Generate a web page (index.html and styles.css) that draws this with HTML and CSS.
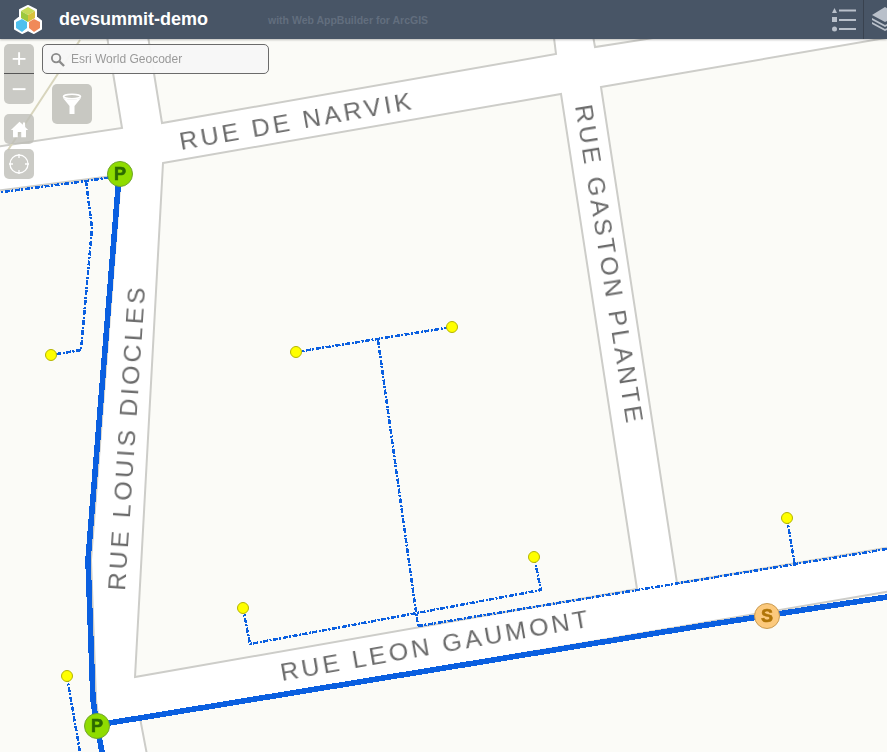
FILE: index.html
```html
<!DOCTYPE html>
<html lang="en">
<head>
    <meta charset="UTF-8">
    <meta name="viewport" content="width=device-width, initial-scale=1.0">
    <title>devsummit-demo</title>
    <link rel="stylesheet" href="styles.css">
</head>
<body>
    <header class="app-header">
        <div class="brand">
            <svg class="logo" viewBox="0 0 30 30" width="30" height="30">
                <path d="M15 1 L23 5 L23 12 L28 16 L28 24 L21 28 L15 25 L9 28 L2 24 L2 16 L7 12 L7 5 Z" fill="#fff" stroke="#fff" stroke-width="2" stroke-linejoin="round"/>
                <path d="M15 2 L22 6 L15 10 L8 6 Z" fill="#c6da55"/>
                <path d="M8 6 L15 10 L15 17 L8 13 Z" fill="#9cc83c"/>
                <path d="M22 6 L15 10 L15 17 L22 13 Z" fill="#d8c23c"/>
                <path d="M3 17 L9 14 L14 17 L14 23 L9 27 L3 23 Z" fill="#4fc0ee"/>
                <path d="M16 17 L21 14 L27 17 L27 23 L21 27 L16 23 Z" fill="#f08a5a"/>
            </svg>
            <span class="app-name">devsummit-demo</span>
            <span class="app-subtitle">with Web AppBuilder for ArcGIS</span>
        </div>
        <div class="header-tools">
            <svg class="tool-icon" viewBox="0 0 24 24" width="24" height="24">
                <path d="M0 5 L2.5 0 L5 5 Z" fill="#b9c0ca"/>
                <rect x="0" y="9" width="5" height="5" fill="#b9c0ca"/>
                <circle cx="2.5" cy="21" r="2.5" fill="#b9c0ca"/>
                <rect x="7" y="1.5" width="17" height="2" fill="#b9c0ca"/>
                <rect x="7" y="11" width="17" height="2" fill="#b9c0ca"/>
                <rect x="7" y="20" width="17" height="2" fill="#b9c0ca"/>
            </svg>
            <div class="layers-tab">
                <svg class="layers-icon" viewBox="0 0 26 24" width="26" height="24">
                    <path d="M13 0 L26 8 L13 15 L0 8 Z" fill="#b9c0ca"/>
                    <path d="M0 11 L13 18 L26 11 L26 13 L13 20 L0 13 Z" fill="#b9c0ca"/>
                    <path d="M0 15 L13 22 L26 15 L26 17 L13 24 L0 17 Z" fill="#b9c0ca"/>
                </svg>
            </div>
        </div>
    </header>

    <main class="map">
        <svg class="map-canvas" viewBox="0 0 887 752" width="887" height="752">
            <rect width="887" height="752" fill="#ffffff"/>
            <g class="block">
                <path d="M163 163 L561 94 L637 589 L135 677 Z"/>
                <path d="M601 87 L892 37 L892 547 L677 583 Z"/>
                <path d="M-5 147 L122 128 L106 30 L-5 30 Z"/>
                <path d="M147 30 L162 123 L556 54 L553 30 Z"/>
                <path d="M592 30 L595 47 L660 37 L660 30 Z"/>
                <path d="M-5 191 L121 175 L91 560 L96 700 L104 760 L-5 760 Z"/>
                <path d="M140 718 L892 591 L892 760 L148 760 Z"/>
            </g>
            <path class="rail" d="M80 40 L8 150"/>
            <g class="street-name">
                <text transform="translate(181 150) rotate(-10)" textLength="238" lengthAdjust="spacingAndGlyphs">RUE DE NARVIK</text>
                <text transform="translate(575 106) rotate(80.8)" textLength="325" lengthAdjust="spacingAndGlyphs">RUE GASTON PLANTE</text>
                <text transform="translate(125 591) rotate(-86.2)" textLength="307" lengthAdjust="spacingAndGlyphs">RUE LOUIS DIOCLES</text>
                <text transform="translate(282 681) rotate(-10)" textLength="315" lengthAdjust="spacingAndGlyphs">RUE LEON GAUMONT</text>
            </g>
            <g class="main-line">
                <path d="M119 176 L88 560 L93 700 L97 726 L102 752"/>
                <path d="M97 725 L700 626 L887 597"/>
            </g>
            <g class="service-line">
                <path d="M-5 193 L86 181 L119 176"/>
                <path d="M86 181 L92 228 L81 350 L51 355"/>
                <path d="M296 352 L452 327"/>
                <path d="M378 340 L418 626"/>
                <path d="M243 608 L250 644 L541 590 L534 557"/>
                <path d="M418 626 L887 549"/>
                <path d="M787 519 L795 566"/>
                <path d="M67 677 L80 752"/>
            </g>
            <g class="service-point">
                <circle cx="51" cy="355" r="5.5"/>
                <circle cx="296" cy="352" r="5.5"/>
                <circle cx="452" cy="327" r="5.5"/>
                <circle cx="534" cy="557" r="5.5"/>
                <circle cx="243" cy="608" r="5.5"/>
                <circle cx="787" cy="518" r="5.5"/>
                <circle cx="67" cy="676" r="5.5"/>
            </g>
            <g class="pole">
                <circle cx="120" cy="174" r="12.5"/>
                <text x="120" y="180">P</text>
                <circle cx="97" cy="726" r="12.5"/>
                <text x="97" y="732">P</text>
            </g>
            <g class="substation">
                <circle cx="767" cy="616" r="12.5"/>
                <text x="767" y="622">S</text>
            </g>
        </svg>

        <div class="map-controls">
            <div class="zoom-box">
                <div class="map-btn zoom-in">+</div>
                <div class="map-btn zoom-out">&minus;</div>
            </div>
            <div class="map-btn home-btn">
                <svg viewBox="0 0 22 22" width="19" height="19">
                    <path d="M11 2 L15 5.5 L15 3 L17.5 3 L17.5 8 L21 11.5 L18.5 11.5 L18.5 20 L13 20 L13 14 L9 14 L9 20 L3.5 20 L3.5 11.5 L1 11.5 Z" fill="#fff"/>
                </svg>
            </div>
            <div class="map-btn locate-btn">
                <svg viewBox="0 0 24 24" width="24" height="24">
                    <circle cx="12" cy="12" r="9" fill="none" stroke="#fff" stroke-width="1.3"/>
                    <path d="M12 2 V6 M12 18 V22 M2 12 H6 M18 12 H22" stroke="#fff" stroke-width="1.3"/>
                </svg>
            </div>
        </div>

        <div class="search-col">
            <div class="search-box">
                <svg viewBox="0 0 16 16" width="15" height="15">
                    <circle cx="6.5" cy="6.5" r="4.5" fill="none" stroke="#8b8b8b" stroke-width="2"/>
                    <path d="M10 10 L15 15" stroke="#8b8b8b" stroke-width="2.4"/>
                </svg>
                <span>Esri World Geocoder</span>
            </div>
            <div class="filter-btn">
                <svg viewBox="0 0 30 30" width="30" height="30">
                    <ellipse cx="15" cy="7.5" rx="8.5" ry="2.2" fill="none" stroke="#fff" stroke-width="1.6"/>
                    <path d="M6 9 L12.5 17 L12.5 25 L17.5 25 L17.5 17 L24 9 Q15 12 6 9 Z" fill="#fff"/>
                </svg>
            </div>
        </div>
    </main>
</body>
</html>
```

FILE: styles.css
```css
* {
    box-sizing: border-box;
}

body {
    margin: 0;
    width: 887px;
    height: 752px;
    overflow: hidden;
    position: relative;
    font-family: "Liberation Sans", Arial, sans-serif;
}

.app-header {
    position: relative;
    z-index: 2;
    height: 39px;
    background: #485566;
    display: flex;
    align-items: center;
    justify-content: space-between;
    box-shadow: 0 1px 2px rgba(0, 0, 0, 0.25);
}

.brand {
    display: flex;
    align-items: center;
    padding-left: 13px;
}

.logo {
    margin-right: 16px;
}

.app-name {
    color: #fff;
    font-size: 18px;
    font-weight: bold;
    margin-right: 60px;
}

.app-subtitle {
    color: #626e7e;
    font-size: 10.5px;
    font-weight: bold;
}

.header-tools {
    display: flex;
    align-items: center;
    height: 39px;
}

.tool-icon {
    margin-right: 7px;
}

.layers-tab {
    width: 24px;
    height: 39px;
    padding: 7px 0 0 8px;
    border-left: 1px solid #39424f;
    overflow: hidden;
}

.layers-icon {
    display: block;
}

.map {
    position: absolute;
    inset: 0;
}

.map-canvas {
    display: block;
}

.block {
    filter: blur(0.7px);
}

.block path {
    fill: #fbfbf7;
    stroke: #cdcdc9;
    stroke-width: 2;
}

.rail {
    fill: none;
    stroke: #d8d5bd;
    stroke-width: 2;
}

.street-name {
    filter: blur(0.5px);
}

.street-name text {
    font-family: "Liberation Sans", Arial, sans-serif;
    font-size: 23px;
    letter-spacing: 3px;
    fill: #6a6a6a;
}

.main-line path {
    fill: none;
    stroke: #0a5fe0;
    stroke-width: 5.6;
    shape-rendering: crispEdges;
}

.service-line path {
    fill: none;
    stroke: #0a5fe0;
    stroke-width: 2.5;
    stroke-dasharray: 5 1.5 2 1.5;
    shape-rendering: crispEdges;
}

.service-point circle {
    fill: #ffff00;
    stroke: #b3b300;
}

.pole circle {
    fill: #8fdc00;
    stroke: #6fa52a;
}

.pole text,
.substation text {
    font-family: "Liberation Sans", Arial, sans-serif;
    font-size: 18px;
    font-weight: bold;
    text-anchor: middle;
    stroke-width: 0.6;
}

.pole text {
    fill: #2c6a00;
    stroke: #2c6a00;
}

.substation circle {
    fill: #fcc97c;
    stroke: #c99a50;
}

.substation text {
    fill: #b07508;
    stroke: #b07508;
}

.map-controls {
    position: absolute;
    left: 4px;
    top: 44px;
    display: flex;
    flex-direction: column;
    gap: 5px;
}

.map-btn {
    width: 30px;
    height: 30px;
    background: rgba(190, 190, 184, 0.8);
    color: #fff;
    display: flex;
    align-items: center;
    justify-content: center;
    border-radius: 5px;
}

.zoom-box {
    display: flex;
    flex-direction: column;
    margin-bottom: 5px;
}

.zoom-in,
.zoom-out {
    font-size: 26px;
}

.zoom-in {
    border-radius: 5px 5px 0 0;
    border-bottom: 1px solid #555;
}

.zoom-out {
    border-radius: 0 0 5px 5px;
}

.search-col {
    position: absolute;
    left: 42px;
    top: 44px;
}

.search-box {
    width: 227px;
    height: 30px;
    background: rgba(247, 247, 247, 0.95);
    border: 1px solid #6b6b6b;
    border-radius: 5px;
    display: flex;
    align-items: center;
    padding-left: 7px;
    gap: 6px;
    color: #9a9a9a;
    font-size: 12px;
}

.filter-btn {
    width: 40px;
    height: 40px;
    margin: 10px 0 0 10px;
    background: rgba(190, 190, 184, 0.85);
    border-radius: 5px;
    display: flex;
    align-items: center;
    justify-content: center;
}
```
